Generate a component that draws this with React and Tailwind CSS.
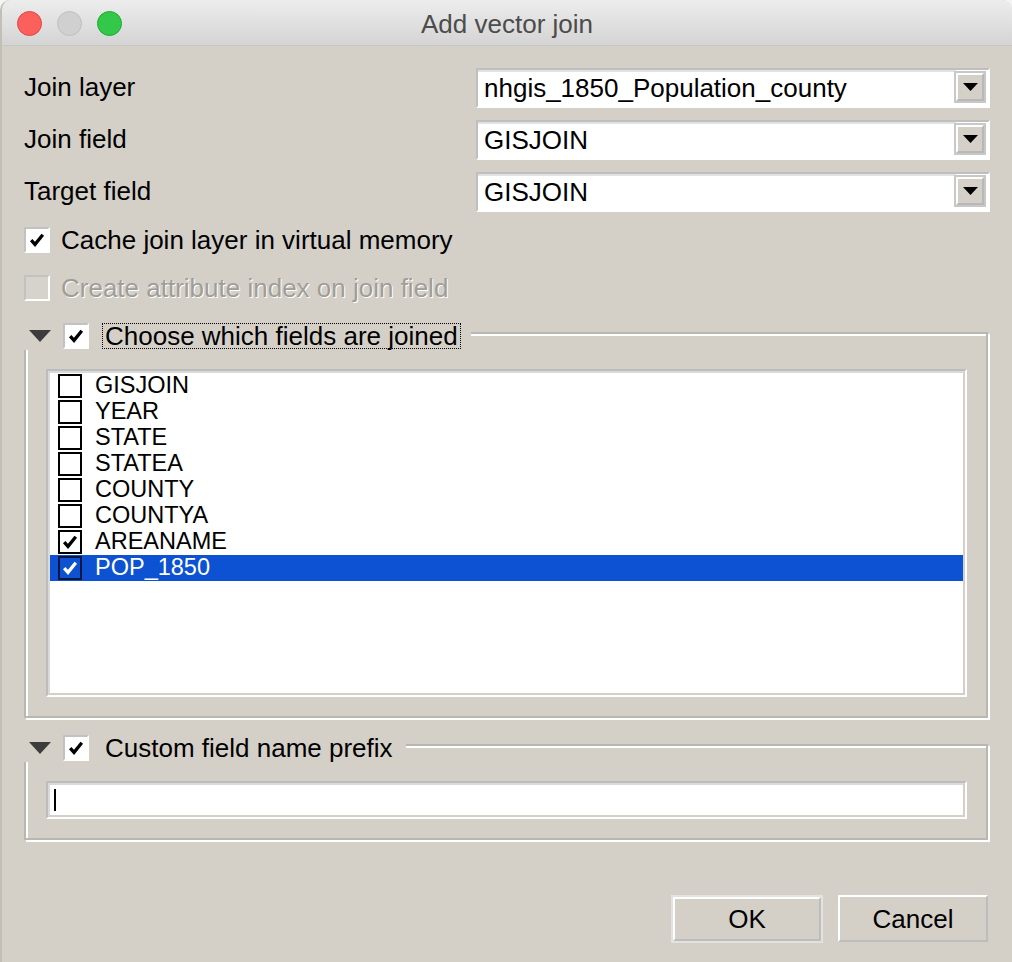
import React from "react";

const fields = [
  { name: "GISJOIN", checked: false },
  { name: "YEAR", checked: false },
  { name: "STATE", checked: false },
  { name: "STATEA", checked: false },
  { name: "COUNTY", checked: false },
  { name: "COUNTYA", checked: false },
  { name: "AREANAME", checked: true },
  { name: "POP_1850", checked: true, selected: true },
];

function Tick({ className }) {
  return (
    <svg viewBox="0 0 16 16" className={className}>
      <path d="M2.2 8.2 L6 12.4 L13.8 2.8" fill="none" stroke="currentColor" strokeWidth="3.3" strokeLinejoin="miter" />
    </svg>
  );
}

// sunken mac/qt style checkbox used in the form
function Checkbox({ checked, disabled }) {
  return (
    <div
      className={
        "flex h-[26px] w-[26px] shrink-0 items-center justify-center border-2 border-t-[#c2c2c2] border-l-[#c2c2c2] border-b-white border-r-white " +
        (disabled ? "bg-[#d6d3cd]" : "bg-white")
      }
    >
      {checked && <Tick className="h-[16px] w-[16px] text-black" />}
    </div>
  );
}

function Combo({ value }) {
  return (
    <div className="flex h-[40px] w-[514px] border-2 border-t-[#bfbfbf] border-l-[#bfbfbf] border-b-white border-r-white bg-white">
      <div className="flex flex-1 items-center border-t-2 border-[#e2e2e2] pb-[3px] pl-[6px] text-[26px] leading-none text-black">
        {value}
      </div>
      <div className="mr-[4px] mt-[3px] flex h-[28px] w-[28px] items-center justify-center border-2 border-t-white border-l-white border-b-[#b8b8b8] border-r-[#b8b8b8] bg-[#d4d0c8] shadow-[0_0_0_2px_#c8c8c8]">
        <svg viewBox="0 0 15 8" className="h-[8px] w-[15px]">
          <polygon points="0,0 15,0 7.5,8" fill="#000" />
        </svg>
      </div>
    </div>
  );
}

function GroupHeader({ label, focused }) {
  return (
    <div className="absolute left-0 top-0 flex h-[28px] items-center bg-[#d4d0c8] pr-[10px]">
      <svg viewBox="0 0 22 12" className="ml-[5px] h-[12px] w-[22px]">
        <polygon points="0,0 22,0 11,12" fill="#3c3c3c" />
      </svg>
      <div className="ml-[12px]">
        <Checkbox checked />
      </div>
      <div
        className={
          "ml-[13px] flex h-[26px] items-center border px-[2px] text-[26px] leading-none text-black " +
          (focused ? "border-dotted border-black" : "border-transparent")
        }
      >
        {label}
      </div>
    </div>
  );
}

export default function App() {
  return (
    <div className="h-[962px] w-[1012px] bg-[#f4f4f4] font-['Liberation_Sans',Arial,sans-serif]">
      <div className="flex h-full flex-col overflow-hidden rounded-t-[10px] border-l-2 border-[#c2bfb9] bg-[#d4d0c8]">
        {/* title bar */}
        <div className="relative flex h-[46px] shrink-0 items-center justify-center border-b border-[#c6c6c6] bg-gradient-to-b from-[#ededed] to-[#d4d4d4] pt-[3px]">
          <div className="absolute left-[15px] top-[11px] flex gap-[15px]">
            <div className="h-[25px] w-[25px] rounded-full border border-[#e0443e] bg-[#fc605c]" />
            <div className="h-[25px] w-[25px] rounded-full border border-[#bfbfbf] bg-[#d0d0d0]" />
            <div className="h-[25px] w-[25px] rounded-full border border-[#1aab29] bg-[#34c84a]" />
          </div>
          <span className="text-[26px] leading-none text-[#4c4c4c]">Add vector join</span>
        </div>

        <div className="flex flex-col pl-[22px] pr-[22px] pt-[22px]">
          <div className="flex flex-col gap-[12px]">
            <div className="flex items-center justify-between">
              <span className="pb-[3px] text-[26px] leading-none text-black">Join layer</span>
              <Combo value="nhgis_1850_Population_county" />
            </div>
            <div className="flex items-center justify-between">
              <span className="pb-[3px] text-[26px] leading-none text-black">Join field</span>
              <Combo value="GISJOIN" />
            </div>
            <div className="flex items-center justify-between">
              <span className="pb-[3px] text-[26px] leading-none text-black">Target field</span>
              <Combo value="GISJOIN" />
            </div>
          </div>

          <div className="mt-[15px] flex h-[26px] items-center gap-[11px]">
            <Checkbox checked />
            <span className="text-[26px] leading-none text-black">Cache join layer in virtual memory</span>
          </div>
          <div className="mt-[22px] flex h-[26px] items-center gap-[11px]">
            <Checkbox disabled />
            <span className="text-[26px] leading-none text-[#a09d97] [text-shadow:1px_1px_0_#ffffff]">
              Create attribute index on join field
            </span>
          </div>

          {/* fields group */}
          <div className="relative mt-[21px] w-[964px] pt-[10px]">
            <div className="border-2 border-[#b9b7b2] px-[20px] pb-[19px] pt-[35px] shadow-[inset_2px_2px_0_#fff,2px_2px_0_#fff]">
              <div className="h-[328px] w-[921px] border-2 border-t-[#bdbdbd] border-l-[#bdbdbd] border-b-white border-r-white bg-white">
                <div className="h-full border-2 border-t-[#dadada] border-l-[#dadada] border-b-[#d4d0c8] border-r-[#d4d0c8]">
                  {fields.map((f) => (
                    <div
                      key={f.name}
                      className={
                        "flex h-[26px] items-center pl-[8px] " + (f.selected ? "bg-[#0c52d2] text-white" : "text-black")
                      }
                    >
                      <div
                        className={
                          "flex h-[24px] w-[24px] items-center justify-center border-2 " +
                          (f.selected ? "border-[#0a1640]" : "border-black bg-white")
                        }
                      >
                        {f.checked && (
                          <Tick className={"h-[16px] w-[16px] " + (f.selected ? "text-white" : "text-black")} />
                        )}
                      </div>
                      <span className="ml-[13px] text-[23.5px] leading-none">{f.name}</span>
                    </div>
                  ))}
                </div>
              </div>
            </div>
            <GroupHeader label="Choose which fields are joined" focused />
          </div>

          {/* prefix group */}
          <div className="relative mt-[16px] w-[964px] pt-[10px]">
            <div className="border-2 border-[#b9b7b2] px-[20px] pb-[19px] pt-[35px] shadow-[inset_2px_2px_0_#fff,2px_2px_0_#fff]">
              <div className="h-[38px] w-[921px] border-2 border-t-[#bdbdbd] border-l-[#bdbdbd] border-b-white border-r-white bg-white">
                <div className="flex h-full items-center border-2 border-t-[#dadada] border-l-[#dadada] border-b-[#d4d0c8] border-r-[#d4d0c8] pl-[4px]">
                  <div className="h-[22px] w-[2px] bg-black" />
                </div>
              </div>
            </div>
            <GroupHeader label="Custom field name prefix" />
          </div>

          {/* buttons */}
          <div className="mt-[55px] flex w-[964px] justify-end gap-[15px]">
            <div className="h-[48px] w-[152px] border-2 border-[#e4e2de]">
              <div className="flex h-full items-center justify-center border-2 border-t-white border-l-white border-b-[#bdbdbd] border-r-[#bdbdbd] text-[26px] leading-none text-black">
                OK
              </div>
            </div>
            <div className="flex h-[47px] w-[150px] items-center justify-center border-2 border-t-white border-l-white border-b-[#bdbdbd] border-r-[#bdbdbd] text-[26px] leading-none text-black">
              Cancel
            </div>
          </div>
        </div>
      </div>
    </div>
  );
}
